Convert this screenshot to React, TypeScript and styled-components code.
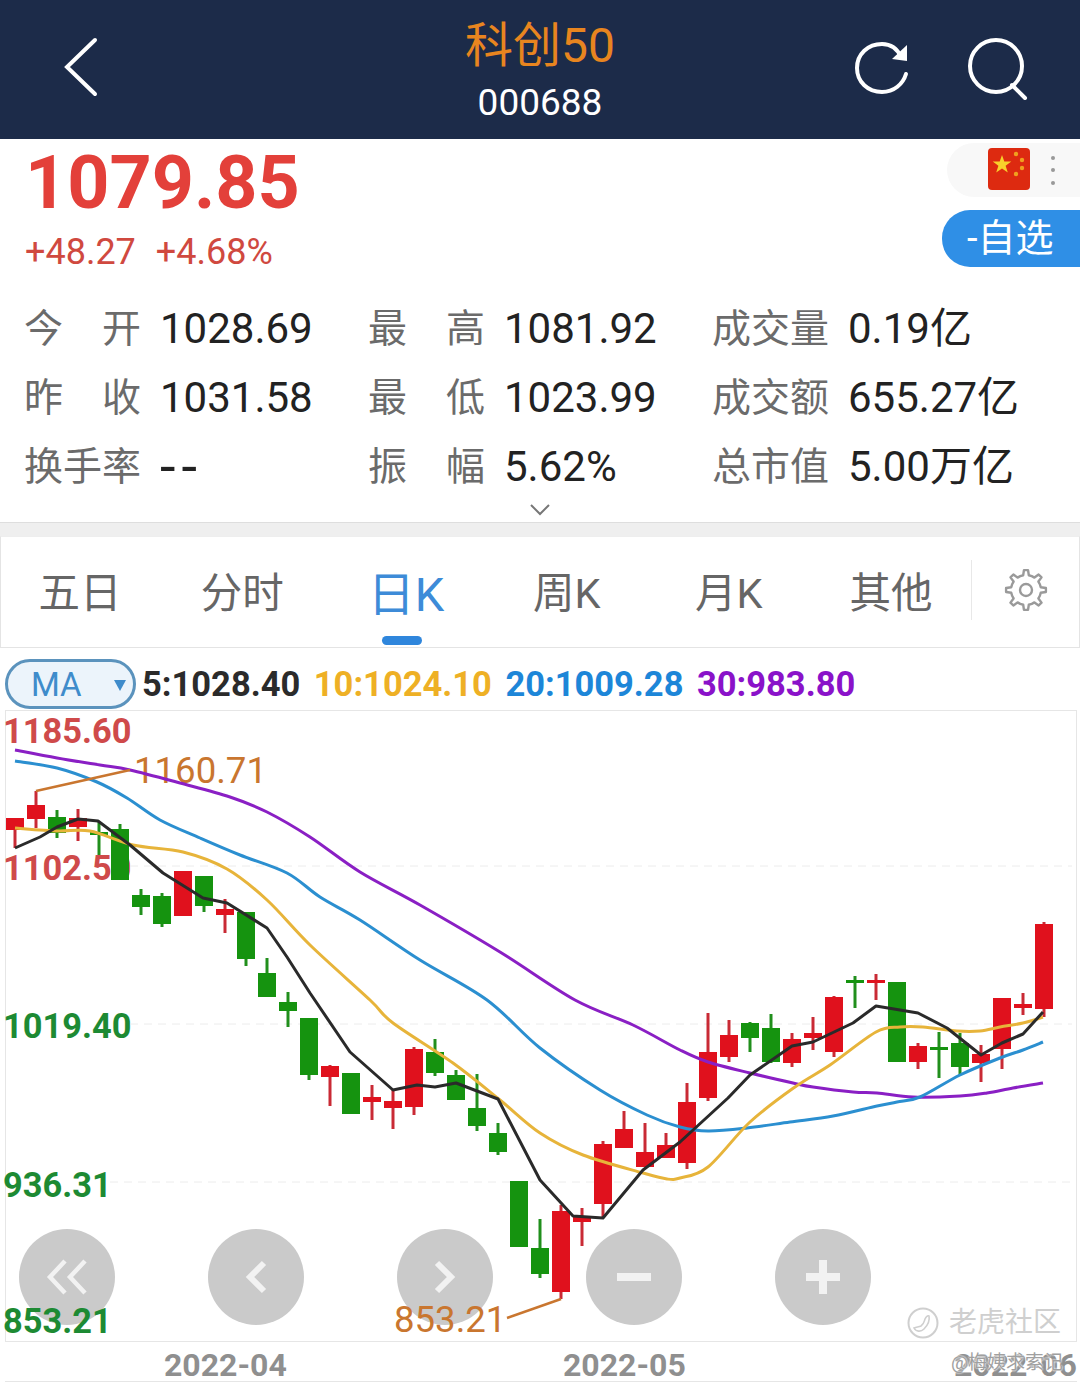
import React from 'react';
import styled, { createGlobalStyle } from 'styled-components';

const SANS = `Roboto, "Noto Sans CJK SC", sans-serif`;

const GlobalStyle = createGlobalStyle`
    html, body {
        margin: 0;
        padding: 0;
        background: #fff;
        font-family: ${SANS};
    }
`;

// x of first candle is 15, each next one is 21px further. [open/top, bottom, high, low]
type Candle = { c: 'r' | 'g'; t: number; b: number; h: number; l: number };

const row = (c: 'r' | 'g', t: number, b: number, h: number, l: number): Candle => ({ c, t, b, h, l });

const CANDLES: Candle[] = [
    row('r', 818, 830, 818, 848),
    row('r', 805, 819, 791, 828),
    row('g', 817, 833, 810, 838),
    row('r', 818, 827, 809, 841),
    row('g', 832, 835, 822, 855),
    row('g', 829, 880, 824, 880),
    row('g', 895, 907, 889, 915),
    row('g', 896, 924, 893, 927),
    row('r', 871, 916, 871, 916),
    row('g', 876, 906, 876, 912),
    row('r', 909, 915, 899, 933),
    row('g', 912, 959, 912, 966),
    row('g', 973, 997, 958, 997),
    row('g', 1002, 1011, 992, 1027),
    row('g', 1018, 1075, 1018, 1080),
    row('r', 1066, 1077, 1065, 1106),
    row('g', 1073, 1114, 1073, 1114),
    row('r', 1097, 1102, 1085, 1120),
    row('r', 1101, 1108, 1090, 1129),
    row('r', 1049, 1107, 1047, 1115),
    row('g', 1052, 1073, 1039, 1076),
    row('g', 1075, 1100, 1070, 1100),
    row('g', 1108, 1126, 1074, 1131),
    row('g', 1133, 1152, 1123, 1155),
    row('g', 1181, 1247, 1181, 1247),
    row('g', 1248, 1274, 1219, 1278),
    row('r', 1211, 1292, 1205, 1299),
    row('r', 1217, 1222, 1208, 1246),
    row('r', 1144, 1204, 1141, 1218),
    row('r', 1129, 1148, 1111, 1148),
    row('r', 1152, 1167, 1123, 1167),
    row('r', 1145, 1158, 1133, 1158),
    row('r', 1102, 1163, 1083, 1169),
    row('r', 1052, 1098, 1013, 1101),
    row('r', 1035, 1057, 1020, 1062),
    row('g', 1023, 1038, 1022, 1052),
    row('g', 1028, 1062, 1014, 1063),
    row('r', 1039, 1063, 1033, 1067),
    row('r', 1033, 1038, 1017, 1050),
    row('r', 997, 1052, 996, 1057),
    row('g', 980, 983, 976, 1008),
    row('r', 980, 983, 974, 1000),
    row('g', 982, 1062, 982, 1062),
    row('r', 1046, 1062, 1043, 1069),
    row('g', 1047, 1049, 1032, 1078),
    row('g', 1043, 1067, 1033, 1075),
    row('r', 1054, 1063, 1045, 1082),
    row('r', 998, 1049, 998, 1069),
    row('r', 1004, 1008, 993, 1015),
    row('r', 924, 1009, 922, 1017),
];

// moving average lines, page coordinates
const MA5 =
    '15,848 40,837 57,827 78,819 98,821 130,845 163,873 203,898 227,903 267,928 287,957 310,993 350,1052 393,1090 417,1085 435,1087 456,1083 498,1099 540,1180 573,1216 603,1218 643,1170 680,1142 728,1098 750,1075 792,1046 813,1042 853,1023 876,1006 918,1013 947,1028 981,1055 1002,1043 1023,1034 1043,1012';
const MA10 =
    '15,828 57,831 90,831 133,845 183,852 227,869 267,900 310,945 370,1000 393,1023 453,1063 500,1100 540,1133 583,1155 643,1173 667,1179 680,1178 708,1167 750,1122 795,1087 830,1065 876,1032 900,1027 923,1027 957,1031 980,1031 1000,1027 1023,1023 1043,1017';
const MA20 =
    '15,761 57,768 97,782 127,798 160,820 200,838 240,855 287,873 320,897 360,920 420,960 487,1000 540,1048 600,1090 647,1115 680,1127 708,1131 747,1128 790,1122 833,1116 877,1106 897,1102 920,1097 960,1075 1000,1058 1023,1050 1043,1042';
const MA30 =
    '15,750 57,758 100,765 130,770 180,783 230,797 267,812 310,837 360,872 420,905 500,952 575,1000 633,1025 680,1050 708,1062 750,1073 793,1083 813,1087 853,1092 877,1093 913,1097 960,1096 987,1093 1013,1088 1043,1083';

// catmull-rom through the sampled points, the slower averages have no visible corners
const smooth = (points: string) => {
    const p = points.split(' ').map((s) => s.split(',').map(Number));
    let d = `M${p[0][0]} ${p[0][1]}`;
    for (let i = 0; i < p.length - 1; i++) {
        const a = p[Math.max(i - 1, 0)];
        const b = p[i];
        const c = p[i + 1];
        const e = p[Math.min(i + 2, p.length - 1)];
        const c1 = [b[0] + (c[0] - a[0]) / 6, b[1] + (c[1] - a[1]) / 6];
        const c2 = [c[0] - (e[0] - b[0]) / 6, c[1] - (e[1] - b[1]) / 6];
        d += `C${c1[0]} ${c1[1]} ${c2[0]} ${c2[1]} ${c[0]} ${c[1]}`;
    }
    return d;
};

const gearPath = () => {
    const pts: string[] = [];
    const teeth = 8;
    for (let i = 0; i < teeth; i++) {
        const a = (i / teeth) * Math.PI * 2 - Math.PI / 2;
        const step = (Math.PI * 2) / teeth;
        [
            [-0.5, 15],
            [-0.24, 15],
            [-0.13, 20],
            [0.13, 20],
            [0.24, 15],
        ].forEach(([o, r]) => {
            const t = a + o * step;
            pts.push(`${(22 + r * Math.cos(t)).toFixed(2)} ${(22 + r * Math.sin(t)).toFixed(2)}`);
        });
    }
    return `M${pts.join('L')}Z`;
};

const STATS = [
    [
        { label: ['今', '开'], value: '1028.69' },
        { label: ['最', '高'], value: '1081.92' },
        { label: ['成交量'], value: '0.19亿' },
    ],
    [
        { label: ['昨', '收'], value: '1031.58' },
        { label: ['最', '低'], value: '1023.99' },
        { label: ['成交额'], value: '655.27亿' },
    ],
    [
        { label: ['换手率'], value: '--' },
        { label: ['振', '幅'], value: '5.62%' },
        { label: ['总市值'], value: '5.00万亿' },
    ],
];

const TABS = ['五日', '分时', '日K', '周K', '月K', '其他'];

const Page = styled.div`
    width: 1080px;
    height: 1384px;
    overflow: hidden;
    background: #fff;
    display: flex;
    flex-direction: column;
`;

const Header = styled.header`
    height: 139px;
    flex: none;
    background: #1c2b49;
    display: flex;
    align-items: center;
    justify-content: space-between;
    padding: 0 50px 0 62px;
    box-sizing: border-box;
`;

const HeaderIcons = styled.div`
    display: flex;
    align-items: center;
    gap: 55px;
    width: 184px;
    justify-content: flex-end;
    margin-top: -3px;
`;

const BackSlot = styled.div`
    width: 172px;
`;

const TitleBlock = styled.div`
    display: flex;
    flex-direction: column;
    align-items: center;
`;

const Title = styled.div`
    color: #e8851f;
    font-size: 48px;
    line-height: 56px;
    margin-top: 3px;
`;

const Code = styled.div`
    color: #fff;
    font-size: 37px;
    line-height: 44px;
    margin-top: 7px;
`;

const Quote = styled.section`
    height: 142px;
    flex: none;
    display: flex;
    justify-content: space-between;
    padding-left: 25px;
`;

const Price = styled.div`
    color: #e3403a;
    font-size: 73.6px;
    font-weight: 700;
    line-height: 84px;
    margin-top: 2px;
`;

const Change = styled.div`
    color: #d0493f;
    font-size: 36px;
    line-height: 44px;
    margin-top: 5px;
    display: flex;
    gap: 20px;
`;

const QuoteSide = styled.div`
    display: flex;
    flex-direction: column;
    align-items: flex-end;
`;

const FlagPill = styled.div`
    width: 133px;
    height: 54px;
    margin-top: 4px;
    background: #f8f8f8;
    border-radius: 27px 0 0 27px;
    display: flex;
    align-items: center;
    padding-left: 41px;
    gap: 21px;
    box-sizing: border-box;
`;

const Dots = styled.div`
    display: flex;
    flex-direction: column;
    gap: 8.5px;
`;

const Dot = styled.i`
    width: 4px;
    height: 4px;
    border-radius: 50%;
    background: #999;
`;

const WatchButton = styled.div`
    width: 138px;
    height: 57px;
    margin-top: 13px;
    background: #2f8fe6;
    color: #fff;
    border-radius: 28px 0 0 28px;
    font-size: 38px;
    line-height: 57px;
    padding-left: 25px;
    box-sizing: border-box;
`;

const Stats = styled.section`
    flex: none;
    height: 241px;
    position: relative;
    padding: 13px 0 0 24px;
    box-sizing: border-box;
`;

const StatRow = styled.div`
    display: grid;
    grid-template-columns: 344px 344px 1fr;
    height: 69px;
    align-items: center;
`;

const Stat = styled.div`
    display: flex;
    align-items: center;
`;

const StatLabel = styled.div`
    width: 117px;
    margin-right: 19px;
    display: flex;
    justify-content: space-between;
    color: #6b6b6b;
    font-size: 39px;
    line-height: 48px;
`;

const StatValue = styled.div<{ $empty?: boolean }>`
    color: #222;
    font-size: ${(p) => (p.$empty ? '56px' : '42px')};
    line-height: 48px;
    letter-spacing: ${(p) => (p.$empty ? '6px' : '0')};
`;

const ExpandIcon = styled.svg`
    position: absolute;
    left: 530px;
    bottom: 6px;
`;

const GrayGap = styled.div`
    flex: none;
    height: 14px;
    background: #efefef;
    border-top: 1px solid #dedede;
    box-sizing: border-box;
`;

const Tabs = styled.nav`
    flex: none;
    height: 112px;
    border: 1px solid #e4e4e4;
    border-top-color: #eee;
    box-sizing: border-box;
    display: flex;
    align-items: stretch;
`;

const TabItem = styled.div<{ $active?: boolean }>`
    width: 162.4px;
    padding-bottom: 4px;
    padding-left: ${(p) => (p.$active ? '3px' : '0')};
    box-sizing: border-box;
    position: relative;
    display: flex;
    align-items: center;
    justify-content: center;
    font-size: ${(p) => (p.$active ? '47px' : '41.5px')};
    color: ${(p) => (p.$active ? '#3d8bd8' : '#666')};

    &:first-child {
        margin-left: -2px;
    }

    ${(p) =>
        p.$active &&
        `&::after {
            content: '';
            position: absolute;
            left: 59px;
            bottom: 2px;
            width: 40px;
            height: 9px;
            border-radius: 5px;
            background: #2f86dc;
        }`}
`;

const GearSlot = styled.div`
    width: 107px;
    height: 60px;
    align-self: center;
    border-left: 1px solid #e8e8e8;
    display: flex;
    align-items: center;
    justify-content: center;
    margin-top: -4px;
    margin-left: -1px;
`;

const Legend = styled.div`
    flex: none;
    height: 62px;
    display: flex;
    align-items: center;
    padding-left: 5px;
    font-size: 34.5px;
    font-weight: 700;
    box-sizing: border-box;
    padding-top: 10px;
`;

const MaPill = styled.div`
    width: 131px;
    height: 50px;
    box-sizing: border-box;
    border: 3px solid #5b93bd;
    border-radius: 25px;
    background: #ecf4fb;
    color: #3f8ccb;
    font-size: 33px;
    font-weight: 400;
    line-height: 46px;
    padding-left: 23px;
    position: relative;
    margin-right: 6px;

    &::after {
        content: '';
        position: absolute;
        right: 7px;
        top: 18px;
        border-left: 6px solid transparent;
        border-right: 6px solid transparent;
        border-top: 11px solid #3f8ccb;
    }
`;

const LegendItem = styled.span<{ $color: string }>`
    color: ${(p) => p.$color};
    margin-right: 13.5px;
`;

const Chart = styled.section`
    flex: none;
    position: relative;
    height: 632px;
    margin: 0 3px 0 5px;
    border: 1px solid #e6e6e6;
    box-sizing: border-box;
`;

// svg keeps page coordinates so candle numbers read straight off the screenshot
const ChartCanvas = styled.svg`
    position: absolute;
    left: -6px;
    top: -711px;
    pointer-events: none;
`;

const AxisLabel = styled.span<{ $top: number; $color: string }>`
    position: absolute;
    left: -3px;
    top: ${(p) => p.$top}px;
    font-size: 34.4px;
    line-height: 40px;
    font-weight: 700;
    color: ${(p) => p.$color};
`;

const PeakLabel = styled.span<{ $left: number; $top: number }>`
    position: absolute;
    left: ${(p) => p.$left}px;
    top: ${(p) => p.$top}px;
    font-size: 36.6px;
    line-height: 44px;
    color: #c9762f;
`;

const NavButtons = styled.div`
    position: absolute;
    left: 13px;
    top: 518px;
    display: flex;
    gap: 93px;
`;

const NavButton = styled.div`
    width: 96px;
    height: 96px;
    border-radius: 50%;
    background: #cacaca;
    display: flex;
    align-items: center;
    justify-content: center;
`;

const Watermark = styled.div`
    position: absolute;
    right: 15px;
    top: 594px;
    display: flex;
    align-items: center;
    gap: 10px;
    color: #cfcfcf;
    font-size: 28px;
    line-height: 36px;
`;

const AxisRow = styled.div`
    flex: none;
    height: 40px;
    margin: 0 3px 0 5px;
    border-bottom: 1px solid #e6e6e6;
    box-sizing: border-box;
    position: relative;
    color: #8f8f8f;
    font-size: 32px;
    font-weight: 700;
    line-height: 46px;
`;

const AxisDate = styled.span<{ $left: number }>`
    position: absolute;
    left: ${(p) => p.$left}px;
    top: 0;
    white-space: nowrap;
`;

const Credit = styled.span`
    position: absolute;
    right: 14px;
    top: -2px;
    color: #a0a0a0;
    font-size: 19px;
    font-weight: 400;
    white-space: nowrap;
    text-shadow: 0 0 2px #fff, 0 0 2px #fff;
`;

const FlagIcon = styled.svg`
    margin-top: -3px;
`;

const Flag = () => (
    <FlagIcon width="42" height="42" viewBox="0 0 42 42">
        <rect width="42" height="42" rx="4" fill="#dd2a10" />
        <path d="M14 7l2.3 6.6h7l-5.7 4.2 2.2 6.8L14 20.4l-5.8 4.2 2.2-6.8-5.7-4.2h7z" fill="#f8d02b" />
        <circle cx="28" cy="6" r="2.2" fill="#f0a01f" />
        <circle cx="34" cy="12" r="2.2" fill="#f0a01f" />
        <circle cx="34" cy="20" r="2.2" fill="#f0a01f" />
        <circle cx="28" cy="26" r="2.2" fill="#f0a01f" />
    </FlagIcon>
);

const Gear = () => (
    <svg width="44" height="44" viewBox="0 0 44 44" fill="none" stroke="#9a9a9a" strokeWidth="2.4" strokeLinejoin="round">
        <path d={gearPath()} />
        <circle cx="22" cy="22" r="6" />
    </svg>
);

const TigerMark = () => (
    <svg width="32" height="32" viewBox="0 0 32 32" fill="none" stroke="#cfcfcf" strokeWidth="2">
        <circle cx="16" cy="16" r="14.5" />
        <path d="M7 21c2 4 7 4 10 1 4-4 6-8 5-13-2-1-3 1-4 3-1 3-1 5-4 7-2 1-4 1-7 2z" strokeWidth="1.6" />
    </svg>
);

export default function App() {
    return (
        <Page>
            <GlobalStyle />
            <Header>
                <BackSlot>
                    <svg width="40" height="64" viewBox="0 0 40 64" fill="none" stroke="#fff" strokeWidth="4" strokeLinecap="round">
                        <path d="M33 5L5 32l28 27" transform="translate(0 -1)" />
                    </svg>
                </BackSlot>
                <TitleBlock>
                    <Title>科创50</Title>
                    <Code>000688</Code>
                </TitleBlock>
                <HeaderIcons>
                    <svg width="58" height="58" viewBox="0 0 58 58" fill="none" stroke="#fff" strokeWidth="4">
                        <path d="M48 18C44 9 37 5 29 5 15 5 4 15 4 29s11 24 25 24c12 0 21-8 24-18" strokeLinecap="round" />
                        <path d="M39 20l15 2V6z" fill="#fff" stroke="none" />
                    </svg>
                    <svg width="64" height="64" viewBox="0 0 64 64" fill="none" stroke="#fff" strokeWidth="4" strokeLinecap="round">
                        <circle cx="30" cy="30" r="26" />
                        <path d="M46 49l13 13" />
                    </svg>
                </HeaderIcons>
            </Header>

            <Quote>
                <div>
                    <Price>1079.85</Price>
                    <Change>
                        <span>+48.27</span>
                        <span>+4.68%</span>
                    </Change>
                </div>
                <QuoteSide>
                    <FlagPill>
                        <Flag />
                        <Dots>
                            <Dot />
                            <Dot />
                            <Dot />
                        </Dots>
                    </FlagPill>
                    <WatchButton>-自选</WatchButton>
                </QuoteSide>
            </Quote>

            <Stats>
                {STATS.map((items, i) => (
                    <StatRow key={i}>
                        {items.map((item) => (
                            <Stat key={item.value}>
                                <StatLabel>
                                    {item.label.map((l) => (
                                        <span key={l}>{l}</span>
                                    ))}
                                </StatLabel>
                                <StatValue $empty={item.value === '--'}>{item.value}</StatValue>
                            </Stat>
                        ))}
                    </StatRow>
                ))}
                <ExpandIcon width="20" height="12" viewBox="0 0 20 12" fill="none" stroke="#777" strokeWidth="2">
                    <path d="M1 1l9 9 9-9" />
                </ExpandIcon>
            </Stats>

            <GrayGap />

            <Tabs>
                {TABS.map((t) => (
                    <TabItem key={t} $active={t === '日K'}>
                        {t}
                    </TabItem>
                ))}
                <GearSlot>
                    <Gear />
                </GearSlot>
            </Tabs>

            <Legend>
                <MaPill>MA</MaPill>
                <LegendItem $color="#2b2b2b">5:1028.40</LegendItem>
                <LegendItem $color="#eeb025">10:1024.10</LegendItem>
                <LegendItem $color="#1d86d8">20:1009.28</LegendItem>
                <LegendItem $color="#8a12c9">30:983.80</LegendItem>
            </Legend>

            <Chart>
                <NavButtons>
                    <NavButton>
                        <svg width="44" height="36" viewBox="0 0 44 36" fill="none" stroke="#f2f2f2" strokeWidth="4.5">
                            <path d="M20 2L5 18l15 16M40 2L25 18l15 16" />
                        </svg>
                    </NavButton>
                    <NavButton>
                        <svg width="24" height="34" viewBox="0 0 24 34" fill="none" stroke="#f2f2f2" strokeWidth="6">
                            <path d="M20 3L6 17l14 14" />
                        </svg>
                    </NavButton>
                    <NavButton>
                        <svg width="24" height="34" viewBox="0 0 24 34" fill="none" stroke="#f2f2f2" strokeWidth="6">
                            <path d="M4 3l14 14L4 31" />
                        </svg>
                    </NavButton>
                    <NavButton>
                        <svg width="34" height="10" viewBox="0 0 34 10">
                            <rect width="34" height="8" y="1" fill="#f2f2f2" />
                        </svg>
                    </NavButton>
                    <NavButton>
                        <svg width="34" height="34" viewBox="0 0 34 34" fill="#f2f2f2">
                            <rect y="13" width="34" height="8" />
                            <rect x="13" width="8" height="34" />
                        </svg>
                    </NavButton>
                </NavButtons>

                <AxisLabel $top={0} $color="#cf4a4a">1185.60</AxisLabel>
                <AxisLabel $top={137} $color="#cf4a4a">1102.50</AxisLabel>
                <AxisLabel $top={295} $color="#1d8a33">1019.40</AxisLabel>
                <AxisLabel $top={454} $color="#1d8a33">936.31</AxisLabel>
                <AxisLabel $top={590} $color="#1d8a33">853.21</AxisLabel>
                <PeakLabel $left={128} $top={38}>1160.71</PeakLabel>
                <PeakLabel $left={388} $top={587}>853.21</PeakLabel>
                <Watermark>
                    <TigerMark />
                    老虎社区
                </Watermark>

                <ChartCanvas width="1080" height="1384" viewBox="0 0 1080 1384" fill="none">
                    <g stroke="#ececec" strokeWidth="1" strokeDasharray="8 6">
                        <path d="M130 866H1072M130 1024H1072M110 1182H1072" />
                    </g>
                    {CANDLES.map((d, i) => {
                        const x = 15 + i * 21;
                        const color = d.c === 'r' ? '#e0111d' : '#15930f';
                        return (
                            <g key={i}>
                                <line x1={x} x2={x} y1={d.h} y2={d.l} stroke={d.c === 'r' ? '#c92a35' : '#218f1c'} strokeWidth="3" />
                                <rect x={x - 9} y={d.t} width="18" height={Math.max(d.b - d.t, 3)} fill={color} />
                            </g>
                        );
                    })}
                    <path d={smooth(MA30)} stroke="#8a1fc4" strokeWidth="3" />
                    <path d={smooth(MA20)} stroke="#2b8fd0" strokeWidth="3" />
                    <path d={smooth(MA10)} stroke="#e7b43a" strokeWidth="3" />
                    <polyline points={MA5} stroke="#2a2a2a" strokeWidth="3" strokeLinejoin="round" />
                    <path d="M36 791L130 770" stroke="#c9762f" strokeWidth="2.5" />
                    <path d="M561 1299L507 1318" stroke="#c9762f" strokeWidth="2.5" />
                </ChartCanvas>
            </Chart>

            <AxisRow>
                <AxisDate $left={159}>2022-04</AxisDate>
                <AxisDate $left={558}>2022-05</AxisDate>
                <AxisDate $left={949}>2022-06</AxisDate>
                <Credit>@梅姨求索记</Credit>
            </AxisRow>
        </Page>
    );
}
